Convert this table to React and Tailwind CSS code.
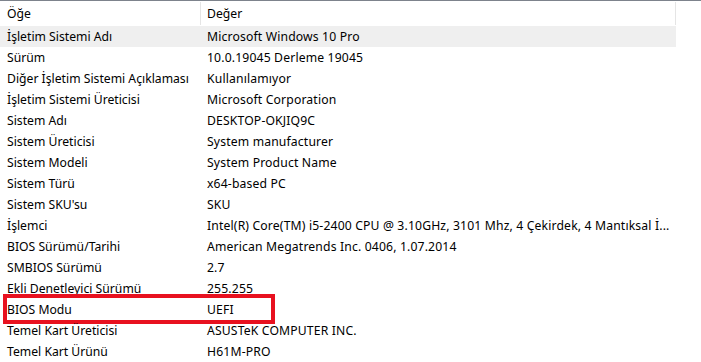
import React from "react";

const rows = [
  ["İşletim Sistemi Adı", "Microsoft Windows 10 Pro"],
  ["Sürüm", "10.0.19045 Derleme 19045"],
  ["Diğer İşletim Sistemi Açıklaması", "Kullanılamıyor"],
  ["İşletim Sistemi Üreticisi", "Microsoft Corporation"],
  ["Sistem Adı", "DESKTOP-OKJIQ9C"],
  ["Sistem Üreticisi", "System manufacturer"],
  ["Sistem Modeli", "System Product Name"],
  ["Sistem Türü", "x64-based PC"],
  ["Sistem SKU'su", "SKU"],
  ["İşlemci", "Intel(R) Core(TM) i5-2400 CPU @ 3.10GHz, 3101 Mhz, 4 Çekirdek, 4 Mantıksal İ..."],
  ["BIOS Sürümü/Tarihi", "American Megatrends Inc. 0406, 1.07.2014"],
  ["SMBIOS Sürümü", "2.7"],
  ["Ekli Denetleyici Sürümü", "255.255"],
  ["BIOS Modu", "UEFI"],
  ["Temel Kart Üreticisi", "ASUSTeK COMPUTER INC."],
  ["Temel Kart Ürünü", "H61M-PRO"],
];

export default function App() {
  return (
    <div
      className="w-[701px] h-[362px] overflow-hidden bg-white text-black text-[12.2px]"
      style={{ fontFamily: '"Noto Sans", "Open Sans", sans-serif' }}
    >
      <div className="h-px bg-[#7d838c]" />
      <div className="flex h-[25px]">
        <div className="w-[201px] flex items-center pl-[7px] pt-px border-r border-[#e5e5e5] my-px">Öğe</div>
        <div className="w-[475px] flex items-center pl-[6px] pt-px border-r border-[#e5e5e5] my-px">Değer</div>
      </div>
      {rows.map(([k, v], i) => (
        <div
          key={k}
          className={`relative flex h-[21px] items-center pt-px w-[676px] ${i === 0 ? "bg-[#efefef]" : ""}`}
        >
          <div className="w-[201px] pl-[7px] whitespace-nowrap">{k}</div>
          <div className="pl-[6px] whitespace-nowrap tracking-[0.15px]">{v}</div>
          {k === "BIOS Modu" && (
            <div className="absolute left-[3px] top-[-5px] w-[272px] h-[30px] border-4 border-[#e8111f]" />
          )}
        </div>
      ))}
    </div>
  );
}
